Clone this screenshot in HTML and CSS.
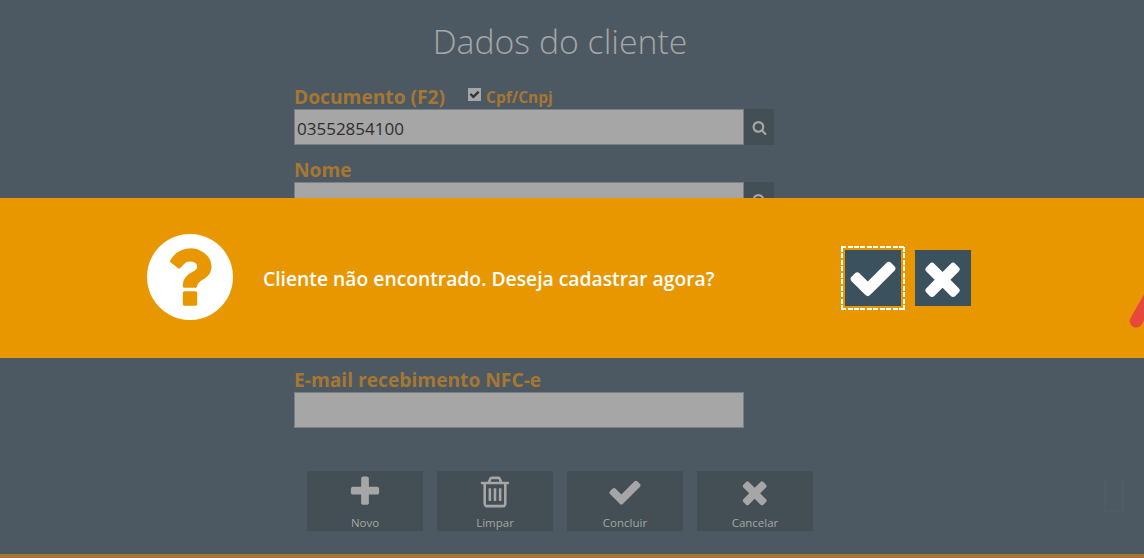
FILE: index.html
```html
<!DOCTYPE html>
<html lang="pt-BR">
<head>
    <meta charset="UTF-8">
    <meta name="viewport" content="width=device-width, initial-scale=1.0">
    <title>Dados do cliente</title>
    <link rel="stylesheet" href="styles.css">
</head>
<body>
    <div class="page">
        <h1 class="title">Dados do cliente</h1>

        <form class="form">
            <div class="field">
                <div class="label-row">
                    <label class="label">Documento (F2)</label>
                    <span class="check-box">
                        <svg viewBox="0 0 1792 1792"><path d="M1671 566q0 40-28 68l-724 724-136 136q-28 28-68 28t-68-28l-136-136-362-362q-28-28-28-68t28-68l136-136q28-28 68-28t68 28l294 295 656-657q28-28 68-28t68 28l136 136q28 28 28 68z"/></svg>
                    </span>
                    <span class="check-label">Cpf/Cnpj</span>
                </div>
                <div class="input-row">
                    <div class="input">03552854100</div>
                    <button type="button" class="search-btn">
                        <svg viewBox="0 0 1792 1792"><path d="M1216 832q0-185-131.5-316.5t-316.5-131.5-316.5 131.5-131.5 316.5 131.5 316.5 316.5 131.5 316.5-131.5 131.5-316.5zm512 832q0 52-38 90t-90 38q-54 0-90-38l-343-342q-179 124-399 124-143 0-273.5-55.5t-225-150-150-225-55.5-273.5 55.5-273.5 150-225 225-150 273.5-55.5 273.5 55.5 225 150 150 225 55.5 273.5q0 220-124 399l343 343q37 37 37 90z"/></svg>
                    </button>
                </div>
            </div>

            <div class="field">
                <div class="label-row">
                    <label class="label">Nome</label>
                </div>
                <div class="input-row">
                    <div class="input"></div>
                    <button type="button" class="search-btn">
                        <svg viewBox="0 0 1792 1792"><path d="M1216 832q0-185-131.5-316.5t-316.5-131.5-316.5 131.5-131.5 316.5 131.5 316.5 316.5 131.5 316.5-131.5 131.5-316.5zm512 832q0 52-38 90t-90 38q-54 0-90-38l-343-342q-179 124-399 124-143 0-273.5-55.5t-225-150-150-225-55.5-273.5 55.5-273.5 150-225 225-150 273.5-55.5 273.5 55.5 225 150 150 225 55.5 273.5q0 220-124 399l343 343q37 37 37 90z"/></svg>
                    </button>
                </div>
            </div>

            <div class="field field-email">
                <div class="label-row">
                    <label class="label">E-mail recebimento NFC-e</label>
                </div>
                <div class="input-row">
                    <div class="input"></div>
                </div>
            </div>
        </form>

        <div class="actions">
            <button type="button" class="action-btn">
                <svg viewBox="0 0 1792 1792"><path d="M1600 736v192q0 40-28 68t-68 28h-416v416q0 40-28 68t-68 28h-192q-40 0-68-28t-28-68v-416h-416q-40 0-68-28t-28-68v-192q0-40 28-68t68-28h416v-416q0-40 28-68t68-28h192q40 0 68 28t28 68v416h416q40 0 68 28t28 68z"/></svg>
                <span>Novo</span>
            </button>
            <button type="button" class="action-btn">
                <svg viewBox="0 0 1792 1792"><path d="M704 736v576q0 14-9 23t-23 9h-64q-14 0-23-9t-9-23v-576q0-14 9-23t23-9h64q14 0 23 9t9 23zm256 0v576q0 14-9 23t-23 9h-64q-14 0-23-9t-9-23v-576q0-14 9-23t23-9h64q14 0 23 9t9 23zm256 0v576q0 14-9 23t-23 9h-64q-14 0-23-9t-9-23v-576q0-14 9-23t23-9h64q14 0 23 9t9 23zm128 724v-948h-896v948q0 22 7 40.5t14.5 27 10.5 8.5h832q3 0 10.5-8.5t14.5-27 7-40.5zm-672-1076h448l-48-117q-7-9-17-11h-317q-10 2-17 11zm928 32v64q0 14-9 23t-23 9h-96v948q0 83-47 143.5t-113 60.5h-832q-66 0-113-58.5t-47-141.5v-952h-96q-14 0-23-9t-9-23v-64q0-14 9-23t23-9h309l70-167q15-37 54-63t79-26h320q40 0 79 26t54 63l70 167h309q14 0 23 9t9 23z"/></svg>
                <span>Limpar</span>
            </button>
            <button type="button" class="action-btn">
                <svg viewBox="0 0 1792 1792"><path d="M1671 566q0 40-28 68l-724 724-136 136q-28 28-68 28t-68-28l-136-136-362-362q-28-28-28-68t28-68l136-136q28-28 68-28t68 28l294 295 656-657q28-28 68-28t68 28l136 136q28 28 28 68z"/></svg>
                <span>Concluir</span>
            </button>
            <button type="button" class="action-btn">
                <svg viewBox="-176 0 1792 1792"><path d="M1298 1322q0 40-28 68l-136 136q-28 28-68 28t-68-28l-294-294-294 294q-28 28-68 28t-68-28l-136-136q-28-28-28-68t28-68l294-294-294-294q-28-28-28-68t28-68l136-136q28-28 68-28t68 28l294 294 294-294q28-28 68-28t68 28l136 136q28 28 28 68t-28 68l-294 294 294 294q28 28 28 68z"/></svg>
                <span>Cancelar</span>
            </button>
        </div>

        <div class="corner-mark"></div>
        <div class="footer-line"></div>
    </div>

    <div class="dialog">
        <svg class="dialog-icon" viewBox="128 128 1536 1536"><path d="M1024 1376v-192q0-14-9-23t-23-9h-192q-14 0-23 9t-9 23v192q0 14 9 23t23 9h192q14 0 23-9t9-23zm256-672q0-88-55.5-163t-138.5-116-170-41q-243 0-371 213-15 24 8 42l132 100q7 6 19 6 16 0 25-12 53-68 86-92 34-24 86-24 48 0 85.5 26t37.5 59q0 38-20 61t-68 45q-63 28-115.5 86.5t-52.5 125.5v36q0 14 9 23t23 9h192q14 0 23-9t9-23q0-19 21.5-49.5t54.5-49.5q32-18 49-28.5t46-35 44.5-48 28-60.5 12.5-81zm384 192q0 209-103 385.5t-279.5 279.5-385.5 103-385.5-103-279.5-279.5-103-385.5 103-385.5 279.5-279.5 385.5-103 385.5 103 279.5 279.5 103 385.5z"/></svg>
        <p class="dialog-text">Cliente não encontrado. Deseja cadastrar agora?</p>
        <div class="dialog-buttons">
            <button type="button" class="dialog-btn dialog-btn-focus">
                <svg viewBox="0 0 1792 1792"><path d="M1671 566q0 40-28 68l-724 724-136 136q-28 28-68 28t-68-28l-136-136-362-362q-28-28-28-68t28-68l136-136q28-28 68-28t68 28l294 295 656-657q28-28 68-28t68 28l136 136q28 28 28 68z"/></svg>
            </button>
            <button type="button" class="dialog-btn">
                <svg viewBox="-176 0 1792 1792"><path d="M1298 1322q0 40-28 68l-136 136q-28 28-68 28t-68-28l-294-294-294 294q-28 28-68 28t-68-28l-136-136q-28-28-28-68t28-68l294-294-294-294q-28-28-28-68t28-68l136-136q28-28 68-28t68 28l294 294 294-294q28-28 68-28t68 28l136 136q28 28 28 68t-28 68l-294 294 294 294q28 28 28 68z"/></svg>
            </button>
        </div>
        <div class="red-mark"></div>
    </div>
</body>
</html>
```

FILE: styles.css
```css
* {
    box-sizing: border-box;
}
html, body {
    height: 100%;
}
body {
    margin: 0;
    background-color: #4d5962;
    font-family: 'Open Sans', sans-serif;
    overflow: hidden;
}
.page {
    height: 558px;
    padding-right: 24px;
    display: flex;
    flex-direction: column;
    align-items: center;
}
.title {
    margin: 16px 0 0;
    font-size: 33.8px;
    line-height: 50px;
    font-weight: 300;
    color: #a6a6a6;
}
.form {
    width: 532px;
    margin-top: 16px;
}
.field {
    margin-bottom: 10px;
}
.field-email {
    margin-top: 147px;
    margin-bottom: 0;
}
.label-row {
    height: 27px;
    display: flex;
    align-items: flex-end;
}
.label {
    font-size: 19.2px;
    line-height: 25px;
    font-weight: 700;
    color: #a67733;
}
.check-box {
    width: 13px;
    height: 13px;
    margin: 0 5px 8px 23px;
    background-color: #a6a6a6;
    display: flex;
    align-items: center;
    justify-content: center;
}
.check-box svg {
    width: 11px;
    height: 11px;
    fill: #333;
}
.check-label {
    font-size: 15.5px;
    line-height: 25px;
    font-weight: 700;
    color: #a67733;
    position: relative;
    top: 1px;
}
.input-row {
    display: flex;
    height: 36px;
}
.input {
    width: 450px;
    border: 1px solid #7b8085;
    background-color: #a6a6a6;
    color: #2e2e2e;
    font-size: 17px;
    line-height: 36px;
    padding: 1px 0 0 2px;
}
.search-btn {
    width: 30px;
    border: none;
    padding: 0;
    background-color: #434f54;
    display: flex;
    align-items: center;
    justify-content: center;
}
.search-btn svg {
    width: 15px;
    height: 15px;
    fill: #a6a6a6;
}
.actions {
    display: flex;
    gap: 14px;
    margin-top: 43px;
}
.action-btn {
    width: 116px;
    height: 60px;
    border: none;
    padding: 0;
    background-color: #434f54;
    color: #a6a6a6;
    font-family: inherit;
    font-size: 11.5px;
    display: flex;
    flex-direction: column;
    align-items: center;
}
.action-btn svg {
    fill: #a6a6a6;
    height: 36px;
    width: 36px;
    margin-top: 3px;
}
.action-btn span {
    line-height: 17px;
    margin-top: 4px;
}
.corner-mark {
    position: absolute;
    left: 1104px;
    top: 480px;
    width: 20px;
    height: 32px;
    border: 2px solid #505c65;
    border-top: none;
}
.footer-line {
    width: 1144px;
    height: 4px;
    margin-top: auto;
    flex-shrink: 0;
    align-self: flex-start;
    background-color: #a67733;
}
.dialog {
    position: absolute;
    left: 0;
    right: 0;
    top: 198px;
    height: 160px;
    overflow: hidden;
    background-color: #e99700;
    display: flex;
    align-items: center;
    padding-left: 147px;
}
.dialog-icon {
    width: 86px;
    height: 86px;
    margin-top: -2px;
    fill: #fff;
}
.dialog-text {
    width: 582px;
    margin: 0 0 0 30px;
    font-size: 19.3px;
    font-weight: 600;
    color: #fff;
}
.dialog-buttons {
    display: flex;
    gap: 14px;
}
.dialog-btn {
    position: relative;
    width: 56px;
    height: 56px;
    border: none;
    padding: 0;
    background-color: #3c515e;
    display: flex;
    align-items: center;
    justify-content: center;
}
.dialog-btn svg {
    width: 52px;
    height: 52px;
    fill: #fff;
}
/* dashed focus ring, outline dashes came out too short */
.dialog-btn-focus::after {
    content: "";
    position: absolute;
    inset: -4px;
    background-image:
        repeating-linear-gradient(90deg, #fff 0 5px, transparent 5px 6.5px),
        repeating-linear-gradient(90deg, #fff 0 5px, transparent 5px 6.5px),
        repeating-linear-gradient(0deg, #fff 0 5px, transparent 5px 6.5px),
        repeating-linear-gradient(0deg, #fff 0 5px, transparent 5px 6.5px);
    background-size: 100% 2px, 100% 2px, 2px 100%, 2px 100%;
    background-position: top, bottom, left, right;
    background-repeat: no-repeat;
}
.red-mark {
    position: absolute;
    left: 1139px;
    top: 82px;
    width: 13px;
    height: 50px;
    border-radius: 7px;
    background-color: #e8483a;
    transform: rotate(30deg);
}
```
